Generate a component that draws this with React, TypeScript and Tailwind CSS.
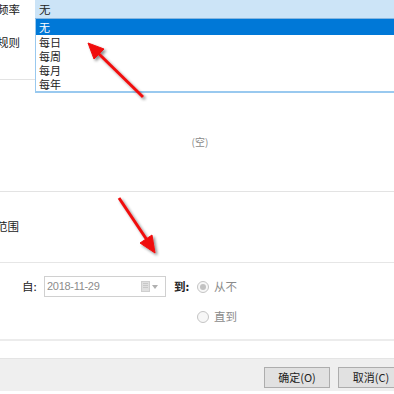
const font = { fontFamily: '"Noto Sans CJK SC", "Liberation Sans", sans-serif' };

function Radio({ checked }: { checked?: boolean }) {
  return (
    <span className="w-[12px] h-[12px] rounded-full border border-[#c4c4c4] bg-[#f7f7f7] flex items-center justify-center">
      {checked && <span className="w-[6px] h-[6px] rounded-full bg-[#c2c2c2]" />}
    </span>
  );
}

function Arrows() {
  return (
    <svg className="absolute inset-0 pointer-events-none" width="394" height="394">
      <defs>
        <filter id="sh" x="-20%" y="-20%" width="140%" height="140%">
          <feGaussianBlur in="SourceAlpha" stdDeviation="1.6" />
          <feOffset dx="2" dy="2" />
          <feComponentTransfer>
            <feFuncA type="linear" slope="0.45" />
          </feComponentTransfer>
          <feMerge>
            <feMergeNode />
            <feMergeNode in="SourceGraphic" />
          </feMerge>
        </filter>
      </defs>
      <g filter="url(#sh)" fill="#f01010" stroke="#f01010">
        <line x1="143" y1="97" x2="97" y2="52" strokeWidth="3" />
        <polygon points="88,43 104,49 94,59" strokeWidth="1" />
        <line x1="119" y1="198" x2="147" y2="240" strokeWidth="3" />
        <polygon points="155,253 152,235 140,243" strokeWidth="1" />
      </g>
    </svg>
  );
}

export default function App() {
  return (
    <div className="w-[394px] h-[394px] bg-white relative overflow-hidden text-[11.5px] text-[#222]" style={font}>
      {/* 频率 / 规则 section */}
      <div className="h-[192px] flex border-b border-[#e3e3e3]">
        <div className="w-[35px] flex flex-col shrink-0">
          <div className="h-[19px] leading-[19px] ml-[-3px]">频率</div>
          <div className="mt-[15px] leading-[16px] ml-[-3px]">规则</div>
          <div className="mt-[29px] h-px bg-[#e3e3e3]" />
        </div>
        <div className="flex-1 flex flex-col">
          <div className="h-[19px] bg-[#cce4f7] border-b border-[#86b6e0] px-[4px] leading-[18px]">无</div>
          <div className="flex-1 pt-[114px] pr-[29px] text-center">
            <span className="text-[10px] leading-[16px] text-[#8a8a8a]">(空)</span>
          </div>
        </div>
      </div>

      {/* 范围 */}
      <div className="h-[71px] pt-[26px] border-b border-[#e6e6e6]">
        <div className="leading-[16px] ml-[-4px]">范围</div>
      </div>

      {/* range form */}
      <div className="h-[78px] pt-[13px] border-b-2 border-[#ececec]">
        <div className="flex items-center h-[21px]">
          <span className="ml-[22px] w-[22px]">自:</span>
          <div className="w-[122px] h-[21px] border border-[#d0d0d0] flex items-center pl-[2px] pr-[7px]">
            <span className="flex-1 text-[11px] text-[#8c8c8c] tracking-[-0.3px]" style={{ fontFamily: '"Liberation Sans", sans-serif' }}>
              2018-11-29
            </span>
            <span className="w-[9px] h-[11px] bg-[#e0e0e0] border border-[#cfcfcf] flex flex-col gap-[1px] p-[1px]">
              <span className="h-px bg-[#c8c8c8]" />
              <span className="h-px bg-[#c8c8c8]" />
              <span className="h-px bg-[#c8c8c8]" />
            </span>
            <span className="ml-[2px] w-0 h-0 border-l-[3px] border-r-[3px] border-t-[4px] border-l-transparent border-r-transparent border-t-[#b0b0b0]" />
          </div>
          <span className="ml-[8px] w-[22px] font-bold">到:</span>
          <span className="ml-[1px] flex items-center gap-[5px]">
            <Radio checked />
            <span className="text-[#8a8a8a]">从不</span>
          </span>
        </div>
        <div className="flex items-center h-[16px] mt-[12px] pl-[197px] gap-[5px]">
          <Radio />
          <span className="text-[#8a8a8a]">直到</span>
        </div>
      </div>

      {/* footer */}
      <div className="h-[17px]" />
      <div className="h-[33px] bg-[#efefef] border-t border-[#e4e4e4] flex items-start justify-end gap-[8px] pt-[8px] mr-[-10px]">
        <button className="w-[66px] h-[21px] bg-[#e1e1e1] border border-[#adadad] text-[11px] leading-[19px]">确定(O)</button>
        <button className="w-[66px] h-[21px] bg-[#e1e1e1] border border-[#adadad] text-[11px] leading-[19px]">取消(C)</button>
      </div>

      {/* open dropdown list */}
      <div className="absolute left-[35px] right-0 top-[19px] h-[74px] bg-white border-l border-b-2 border-[#99c9ef] text-[11px]">
        <div className="h-[16px] bg-[#0078d7] text-white px-[3px] leading-[16px]">无</div>
        {['每日', '每周', '每月', '每年'].map((t) => (
          <div key={t} className="h-[14px] px-[3px] leading-[14px]">
            {t}
          </div>
        ))}
      </div>

      <Arrows />
    </div>
  );
}
